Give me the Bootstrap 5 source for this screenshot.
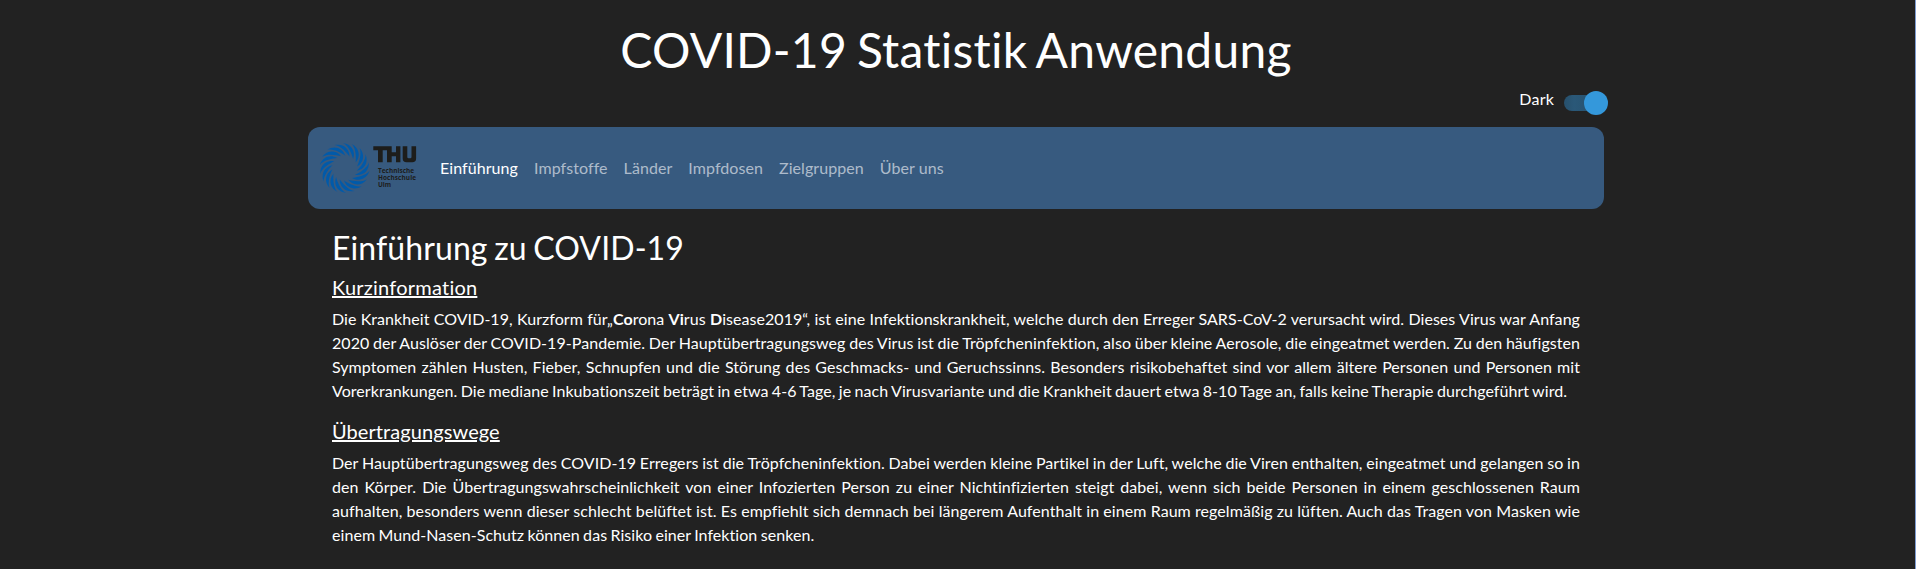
<!DOCTYPE html>
<html lang="de">
<head>
<meta charset="utf-8">
<title>COVID-19 Statistik Anwendung</title>
<link href="https://cdn.jsdelivr.net/npm/bootstrap@5.3.0/dist/css/bootstrap.min.css" rel="stylesheet">
<style>
body{background:#222;color:#fff;font-family:Lato,sans-serif;font-size:16px;line-height:1.5;padding-right:3px;height:569px;overflow:hidden;border-right:1px solid #7d9bd0;font-variant-ligatures:none}
h1{font-size:48px;font-weight:400;line-height:1.2;padding-top:21px;word-spacing:-2.6px;letter-spacing:.23px}
h2{font-size:32px;font-weight:400;word-spacing:-1.7px;letter-spacing:.1px}
h5{font-size:20px;font-weight:400;text-decoration:underline;letter-spacing:.08px}
.kurz{letter-spacing:.22px}
.switch-row{height:48px;padding-top:8px;gap:10px;letter-spacing:.2px}
.main-nav{background:#375a7f;border-radius:12px;height:82px}
.main-nav .nav-link{color:rgba(255,255,255,.6);letter-spacing:.07px}
.main-nav .nav-link.active{color:#fff}
.text-block{text-align:justify;padding-top:20px}
.text-block p{word-spacing:-.8px;letter-spacing:.055px}
.toggle{width:44px;height:24px;margin:4px -4px 0 0}
.logo{width:98px;height:52px;margin:0 14px 0 12px}
b{font-weight:700}
</style>
</head>
<body>
<div class="container">
  <h1 class="text-center mb-0">COVID-19 Statistik Anwendung</h1>
  <div class="d-flex justify-content-end switch-row">
    <span>Dark</span>
    <svg class="toggle" viewBox="0 0 44 24"><defs><linearGradient id="track" x1="0" x2="1"><stop offset="0" stop-color="#27506c"/><stop offset=".3" stop-color="#2a5878"/><stop offset="1" stop-color="#27506c"/></linearGradient></defs><rect x="0" y="4" width="34" height="16" rx="8" fill="url(#track)"/><circle cx="32" cy="12" r="12" fill="#3498db"/></svg>
  </div>
  <nav class="navbar navbar-expand main-nav p-0">
    <svg class="logo" viewBox="0 0 98 52">
      <g id="ring" transform="translate(24.600 26)" fill="#005aaa"></g>
      <path d="M53.300 4.300H71.700V10.300H76V4.300H80.400V20.300H76V14.300H71.700V20.300H67V8.300H62.700V20.300H58V8.300H53.300Z" fill="#1d1d1b"/>
      <path d="M82.700 4.300H87.300V15Q87.300 16.300 88.600 16.300H90.200Q91.500 16.300 91.500 15V4.300H96.100V16.500Q96.100 20.300 92.300 20.300H86.500Q82.700 20.300 82.700 16.500Z" fill="#1d1d1b"/>
      <g fill="#1d1d1b" font-family="Open Sans, sans-serif" font-weight="700" font-size="6.400">
        <text x="58" y="31.300" textLength="36">Technische</text><text x="58" y="38.300" textLength="38">Hochschule</text><text x="58" y="45.300" textLength="13">Ulm</text>
      </g>
    </svg>
    <div class="navbar-nav">
      <a class="nav-link active" href="#">Einführung</a><a class="nav-link" href="#">Impfstoffe</a><a class="nav-link" href="#">Länder</a><a class="nav-link" href="#">Impfdosen</a><a class="nav-link" href="#">Zielgruppen</a><a class="nav-link" href="#">Über uns</a>
    </div>
  </nav>
  <main class="px-4 text-block">
    <h2>Einführung zu COVID-19</h2>
    <h5 class="kurz">Kurzinformation</h5>
    <p>Die Krankheit COVID-19, Kurzform für„<b>Co</b>rona <b>Vi</b>rus <b>D</b>isease2019“, ist eine Infektionskrankheit, welche durch den Erreger SARS-CoV-2 verursacht wird. Dieses Virus war Anfang 2020 der Auslöser der COVID-19-Pandemie. Der Hauptübertragungsweg des Virus ist die Tröpfcheninfektion, also über kleine Aerosole, die eingeatmet werden. Zu den häufigsten Symptomen zählen Husten, Fieber, Schnupfen und die Störung des Geschmacks- und Geruchssinns. Besonders risikobehaftet sind vor allem ältere Personen und Personen mit Vorerkrankungen. Die mediane Inkubationszeit beträgt in etwa 4-6 Tage, je nach Virusvariante und die Krankheit dauert etwa 8-10 Tage an, falls keine Therapie durchgeführt wird.</p>
    <h5>Übertragungswege</h5>
    <p>Der Hauptübertragungsweg des COVID-19 Erregers ist die Tröpfcheninfektion. Dabei werden kleine Partikel in der Luft, welche die Viren enthalten, eingeatmet und gelangen so in den Körper. Die Übertragungswahrscheinlichkeit von einer Infozierten Person zu einer Nichtinfizierten steigt dabei, wenn sich beide Personen in einem geschlossenen Raum aufhalten, besonders wenn dieser schlecht belüftet ist. Es empfiehlt sich demnach bei längerem Aufenthalt in einem Raum regelmäßig zu lüften. Auch das Tragen von Masken wie einem Mund-Nasen-Schutz können das Risiko einer Infektion senken.</p>
  </main>
</div>
<script src="https://cdn.jsdelivr.net/npm/bootstrap@5.3.0/dist/js/bootstrap.bundle.min.js"></script>
<script>
// Ring of 18 curved blades
const ring = document.getElementById('ring');
for (let i = 0; i < 18; i++) {
  const blade = document.createElementNS('http://www.w3.org/2000/svg', 'path');
  blade.setAttribute('d', 'M-1.500 -25C6.500 -24 11.500 -17 8.500 -9C7.500 -13.400 4 -22.500 -1.500 -25Z');
  blade.setAttribute('transform', `rotate(${i * 20})`);
  ring.appendChild(blade);
}
</script>
</body>
</html>
